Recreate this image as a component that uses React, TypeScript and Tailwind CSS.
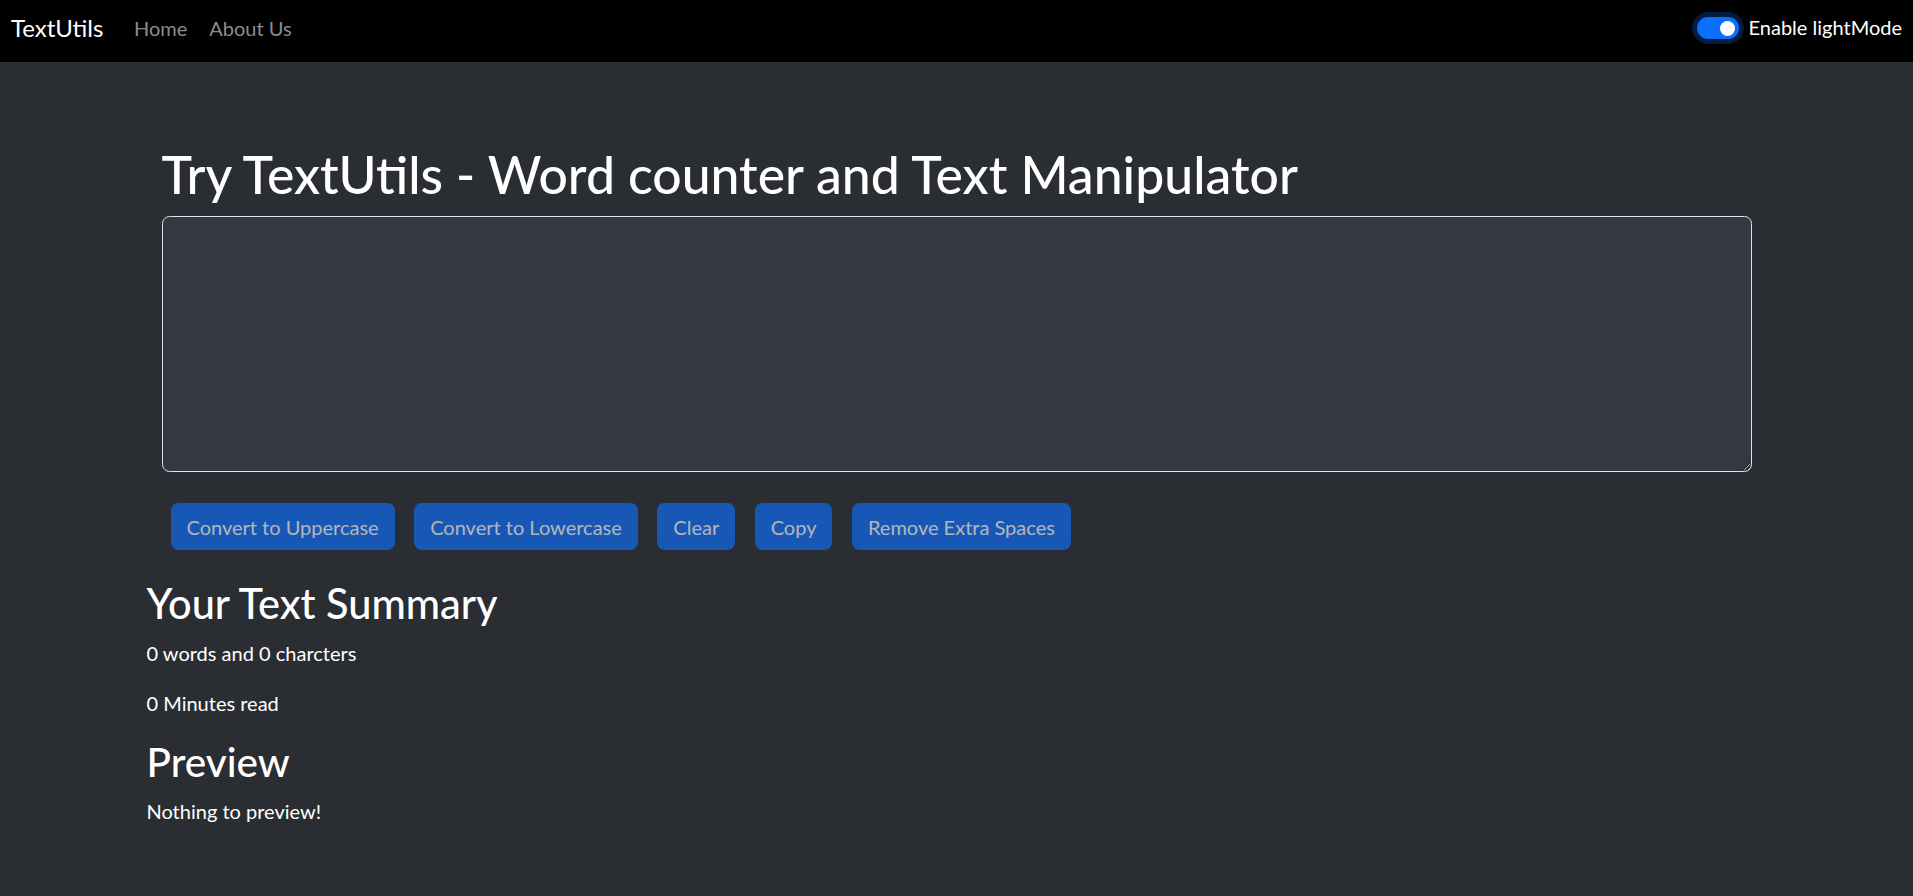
import { useState } from "react";

const buttons = ["Convert to Uppercase", "Convert to Lowercase", "Clear", "Copy", "Remove Extra Spaces"];

function Navbar() {
  return (
    <nav className="h-[62px] bg-black flex items-start px-[11px] text-white">
      <a href="#" className="mt-[13px] w-[123px] text-[24px] leading-[30px]">TextUtils</a>
      <div className="flex gap-[22px] mt-[13px] text-[20px] leading-[30px] text-[#8c8c8c]">
        <a href="#">Home</a>
        <a href="#">About Us</a>
      </div>
      <div className="ml-auto flex items-start">
        <div className="mt-[17px] w-[42px] h-[22px] rounded-full bg-[#0d6efd] shadow-[0_0_0_5px_#031b3f] flex items-center justify-end pr-[4px]">
          <span className="w-[15px] h-[15px] rounded-full bg-white" />
        </div>
        <label className="ml-[10px] mt-[12px] text-[20px] leading-[30px]">Enable lightMode</label>
      </div>
    </nav>
  );
}

export default function App() {
  const [text, setText] = useState("");
  const words = text.split(/\s+/).filter((w) => w.length > 0).length;

  return (
    <div className="min-h-[896px] bg-[#2a2d31] text-white font-['Lato',sans-serif]">
      <Navbar />
      <div className="w-[1650px] mx-auto px-[15px] pt-[82px]">
        <div className="px-[15px]">
          <h1 className="text-[51.7px] leading-[60px] font-medium mb-[12px]">Try TextUtils - Word counter and Text Manipulator</h1>
          <textarea
            value={text}
            onChange={(e) => setText(e.target.value)}
            className="block w-full h-[256px] px-[15px] py-[8px] text-[20px] bg-[#353842] text-white border border-[#dee2e6] rounded-[7.5px] resize-y outline-none"
          />
          <div className="flex gap-[19.5px] pl-[9px] mt-[31px]">
            {buttons.map((b) => (
              <button
                key={b}
                disabled
                className="h-[47px] px-[16px] text-[20px] leading-[30px] bg-[#0d6efd] text-white rounded-[7.5px] opacity-65"
              >
                {b}
              </button>
            ))}
          </div>
        </div>
        <div className="mt-[29px]">
          <h2 className="text-[41.5px] leading-[48px] font-medium mb-[11px]">Your Text Summary</h2>
          <p className="text-[20px] leading-[30px] mb-[20px]">{words} words and {text.length} charcters</p>
          <p className="text-[20px] leading-[30px] mb-[20px]">{0.008 * words} Minutes read</p>
          <h2 className="text-[40.5px] leading-[48px] font-medium mb-[10px]">Preview</h2>
          <p className="text-[20px] leading-[30px]">{text.length > 0 ? text : "Nothing to preview!"}</p>
        </div>
      </div>
    </div>
  );
}
